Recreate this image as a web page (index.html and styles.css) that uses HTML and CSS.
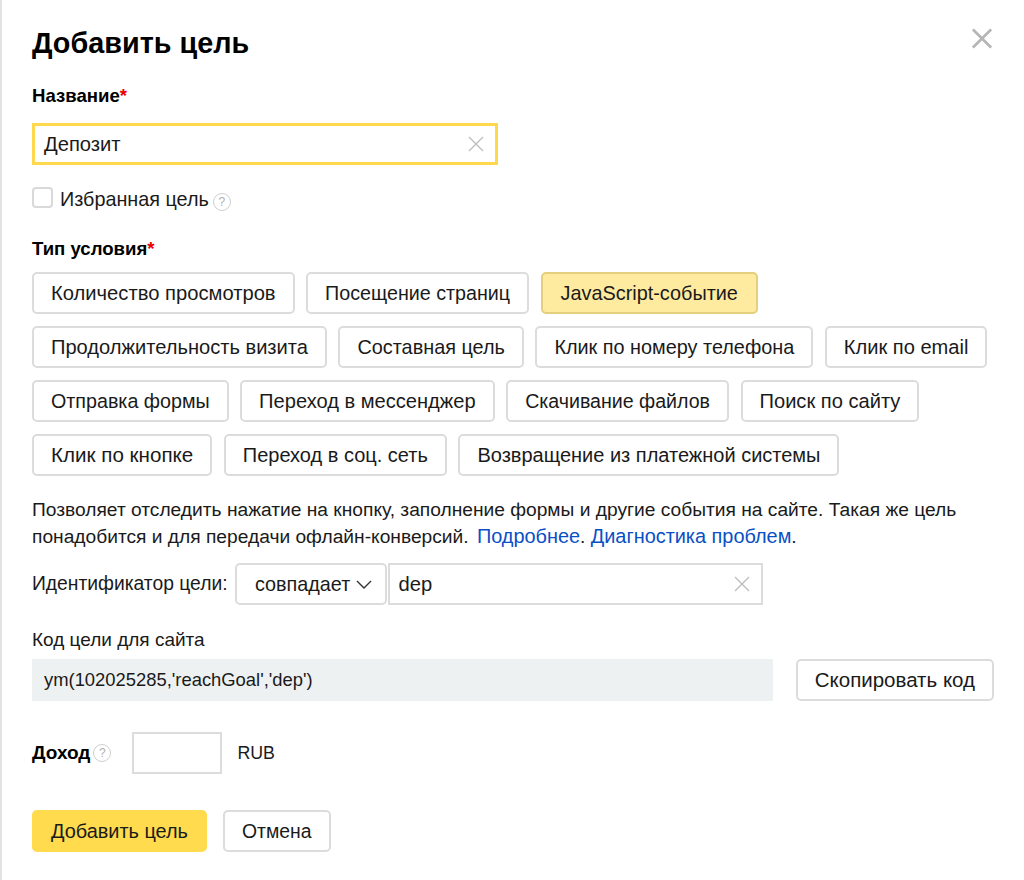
FILE: index.html
```html
<!DOCTYPE html>
<html lang="ru">
<head>
<meta charset="utf-8">
<title>Добавить цель</title>
<link rel="stylesheet" href="styles.css">
</head>
<body>
<main class="dialog">
  <header class="head">
    <h1 class="title">Добавить цель</h1>
    <svg class="close" viewBox="0 0 22 22" width="20" height="21"><path d="M1 1 21 21M21 1 1 21"/></svg>
  </header>

  <div class="label label-name">Название<span class="req">*</span></div>
  <div class="input input-name">
    <span class="val">Депозит</span>
    <svg class="clear" viewBox="0 0 16 16" width="16" height="16"><path d="M1 1 15 15M15 1 1 15"/></svg>
  </div>

  <div class="fav">
    <span class="check"></span>
    <span>Избранная цель</span>
    <span class="hint">?</span>
  </div>

  <div class="label label-type">Тип условия<span class="req">*</span></div>
  <div class="chips">
    <div class="btn t-xl">Количество просмотров</div>
    <div class="btn t-s">Посещение страниц</div>
    <div class="btn btn-on t-m">JavaScript-событие</div>
    <div class="btn">Продолжительность визита</div>
    <div class="btn t-m">Составная цель</div>
    <div class="btn t-m">Клик по номеру телефона</div>
    <div class="btn">Клик по email</div>
    <div class="btn t-s">Отправка формы</div>
    <div class="btn">Переход в мессенджер</div>
    <div class="btn t-xs">Скачивание файлов</div>
    <div class="btn">Поиск по сайту</div>
    <div class="btn t-xxl">Клик по кнопке</div>
    <div class="btn t-n">Переход в соц. сеть</div>
    <div class="btn t-n">Возвращение из платежной системы</div>
  </div>

  <p class="desc">Позволяет отследить нажатие на кнопку, заполнение формы и другие события на сайте. Такая же цель понадобится и для передачи офлайн-конверсий. <a class="more" href="#">Подробнее</a>. <a href="#">Диагностика проблем</a>.</p>

  <div class="ident">
    <span class="ident-label">Идентификатор цели:</span>
    <div class="btn select">совпадает
      <svg class="chev" viewBox="0 0 16 9" width="16" height="9"><path d="M1 1 8 8 15 1"/></svg>
    </div>
    <div class="input input-dep">
      <span class="val">dep</span>
      <svg class="clear" viewBox="0 0 16 16" width="16" height="16"><path d="M1 1 15 15M15 1 1 15"/></svg>
    </div>
  </div>

  <div class="code-label">Код цели для сайта</div>
  <div class="code-row">
    <div class="code">ym(102025285,'reachGoal','dep')</div>
    <div class="btn btn-copy">Скопировать код</div>
  </div>

  <div class="income">
    <span class="label">Доход</span>
    <span class="hint hint-income">?</span>
    <span class="input input-income"></span>
    <span class="cur">RUB</span>
  </div>

  <div class="actions">
    <div class="btn btn-primary">Добавить цель</div>
    <div class="btn btn-cancel">Отмена</div>
  </div>
</main>
</body>
</html>
```

FILE: styles.css
```css
* { box-sizing: border-box; }
html, body { margin: 0; height: 100%; background: #fff; }
body {
  font-family: "Liberation Sans", Arial, sans-serif;
  font-size: 19.2px;
  color: #1a1a1a;
}
.dialog {
  position: relative;
  height: 880px;
  overflow: hidden;
  border-left: 2px solid #e2e2e2;
  padding: 24px 30px 0 30px;
}
.dialog::before {
  content: "";
  position: absolute;
  left: -2px;
  top: 0;
  width: 2px;
  height: 102px;
  background: linear-gradient(to bottom,
    #e2e2e2 0, #e2e2e2 22px, #333 22px, #666 27px, #aaa 33px, #e2e2e2 33px,
    #e2e2e2 60px, #b5b5b5 60px, #b5b5b5 61px, #e2e2e2 61px,
    #e2e2e2 101px, #b5b5b5 101px, #b5b5b5 102px);
}
.head { display: flex; justify-content: space-between; align-items: center; height: 38px; }
.title { margin: 0; font-size: 28.8px; line-height: 38px; font-weight: 700; color: #000; }
.close { margin-right: 2px; margin-top: -9px; }
.close path { stroke: #b5b5b5; stroke-width: 3; fill: none; }
.label { font-weight: 700; color: #000; font-size: 18.6px; line-height: 24px; }
.label-name { margin-top: 22px; }
.req { color: #e60000; }
.input { display: flex; align-items: center; justify-content: space-between; border: 2px solid #dcdcdc; background: #fff; height: 42px; }
.val { font-size: 20.2px; }
.input-name { width: 466px; margin-top: 15px; border: 3px solid #ffd84d; padding: 0 11px 0 9px; }
.clear path { stroke: #bdbdbd; stroke-width: 1.4; fill: none; }
.fav { display: flex; align-items: center; height: 24px; margin-top: 22px; font-size: 19.8px; }
.check { width: 21px; height: 21px; border: 2px solid #d9d9d9; border-radius: 4px; margin-right: 7px; margin-top: -3px; }
.hint {
  display: inline-flex; align-items: center; justify-content: center;
  width: 18px; height: 18px; border: 1.5px solid #cfcfcf; border-radius: 50%;
  font-size: 12px; color: #b0b0b0; margin-left: 4px; margin-top: 5px;
}
.label-type { margin-top: 26px; }
.chips { display: flex; flex-wrap: wrap; gap: 12px 11.5px; margin-top: 11px; }
.btn {
  display: inline-flex; align-items: center; justify-content: center; flex: none;
  height: 42px; padding: 0 17px; border: 2px solid #dcdcdc; border-radius: 5px; background: #fff; white-space: nowrap;
  font-size: 20.1px;
}
.t-xs { font-size: 19.6px; }
.t-s { font-size: 19.7px; }
.t-m { font-size: 19.85px; }
.t-n { font-size: 20px; }
.t-xl { font-size: 20.2px; }
.t-xxl { font-size: 20.6px; }
.btn-on { background: #ffeba0; border-color: #e3cf7e; padding: 0 18px; }
.btn-primary { background: #ffdb4d; border-color: #ffdb4d; font-size: 19.9px; }
.btn-cancel { font-size: 19.4px; }
.btn-copy { font-size: 20.5px; }
.desc { margin: 20px 0 0; line-height: 27px; width: 950px; }
.desc a { color: #0a4fc4; text-decoration: none; font-size: 19.9px; }
.desc .more { margin-left: 3px; }
.ident { display: flex; align-items: center; margin-top: 13px; }
.ident-label { margin-right: 7px; font-size: 19.3px; }
.select { padding: 0 9px 0 15px; gap: 6px; width: 152px; font-size: 19.8px; }
.chev path { stroke: #333; stroke-width: 1.4; fill: none; }
.input-dep { width: 375px; margin-left: 1px; padding: 0 11px 0 9px; }
.code-label { margin-top: 23px; line-height: 24px; font-size: 19px; }
.code-row { display: flex; justify-content: space-between; margin-top: 7px; width: 962px; }
.code { width: 741px; height: 42px; background: #eef1f2; padding-left: 12px; display: flex; align-items: center; font-size: 18.4px; }
.income { display: flex; align-items: center; margin-top: 31px; }
.income .label { font-size: 19px; }
.hint-income { margin-left: 3px; margin-top: 0; margin-right: 21px; }
.input-income { width: 90px; }
.cur { margin-left: 15px; font-size: 17.8px; }
.actions { display: flex; gap: 16px; margin-top: 36px; }
```
